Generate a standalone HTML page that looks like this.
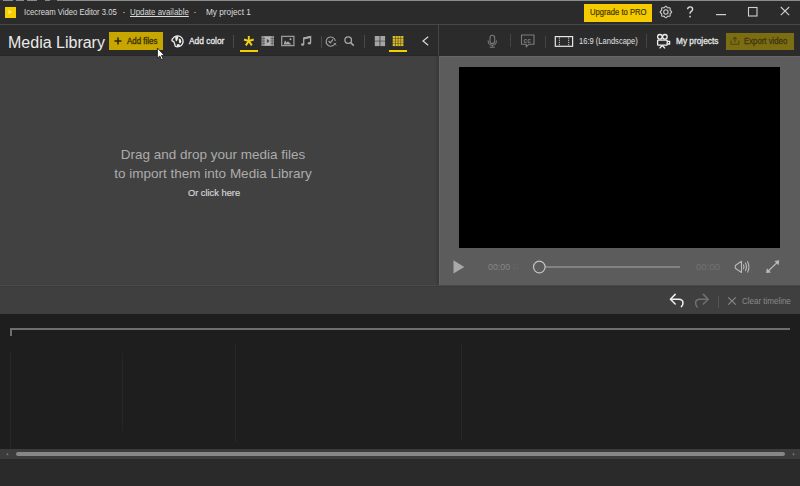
<!DOCTYPE html>
<html><head><meta charset="utf-8">
<style>
*{margin:0;padding:0;box-sizing:border-box}
html,body{width:800px;height:486px;overflow:hidden;background:#2a2a2a;font-family:"Liberation Sans",sans-serif}
.a{position:absolute}
.t{position:absolute;white-space:nowrap;line-height:1;transform-origin:0 0}
svg{position:absolute;overflow:visible;left:0;top:0}
</style></head><body>
<!-- title bar -->
<div class="a" style="left:0;top:0;width:800px;height:24px;background:#2b2b2b"></div>
<div class="a" style="left:0;top:0;width:800px;height:1px;background:#8c8c8c"></div>
<div class="a" style="left:0;top:0;width:3px;height:1px;background:#333"></div><div class="a" style="left:13px;top:0;width:3px;height:1px;background:#333"></div><div class="a" style="left:24px;top:0;width:3px;height:1px;background:#2a2a2a"></div><div class="a" style="left:37px;top:0;width:8px;height:1px;background:#2a2a2a"></div><div class="a" style="left:50px;top:0;width:7px;height:1px;background:#333"></div>
<div class="a" style="left:0;top:24px;width:800px;height:1px;background:#474747"></div>
<div class="a" style="left:5px;top:6.5px;width:11px;height:11px;background:#f5cf00"></div>
<div class="t" style="left:23.5px;top:8.4px;font-size:9px;color:#dcdcdc;transform:scaleX(0.856)">Icecream Video Editor 3.05</div>
<div class="a" style="left:123px;top:12px;width:2px;height:1px;background:#888"></div>
<div class="t" style="left:129.5px;top:8.4px;font-size:9px;color:#dcdcdc;text-decoration:underline;transform:scaleX(0.877)">Update available</div>
<div class="a" style="left:194px;top:12px;width:2px;height:1px;background:#888"></div>
<div class="t" style="left:206px;top:8.4px;font-size:9px;color:#dcdcdc;transform:scaleX(0.914)">My project 1</div>
<div class="a" style="left:584px;top:4px;width:68px;height:18px;background:#f5cb00"></div>
<div class="t" style="left:589.5px;top:8.4px;font-size:9px;color:#403600;-webkit-text-stroke:0.2px #403600;transform:scaleX(0.85)">Upgrade to PRO</div>
<!-- toolbar -->
<div class="a" style="left:0;top:25px;width:800px;height:31px;background:#2b2b2b"></div>
<div class="a" style="left:0;top:55px;width:438px;height:1px;background:#272727"></div>
<div class="a" style="left:438px;top:25px;width:1px;height:31px;background:#454545"></div>
<div class="a" style="left:438px;top:56px;width:1px;height:229px;background:#3a3a3a"></div>
<div class="t" style="left:8px;top:34.5px;font-size:16px;color:#eaeaea">Media Library</div>
<div class="a" style="left:109px;top:32px;width:54px;height:18px;background:#c8a600"></div>
<div class="t" style="left:126.5px;top:36.5px;font-size:9px;color:#3a3000;-webkit-text-stroke:0.35px #3a3000;transform:scaleX(0.88)">Add files</div>
<div class="t" style="left:188.5px;top:36.5px;font-size:9px;color:#e8e8e8;-webkit-text-stroke:0.3px #e8e8e8;transform:scaleX(0.93)">Add color</div>
<div class="a" style="left:233px;top:35px;width:1px;height:13px;background:#4a4a4a"></div>
<div class="a" style="left:240px;top:50px;width:18px;height:2px;background:#f0d000"></div>
<div class="a" style="left:321px;top:36px;width:1px;height:12px;background:#4a4a4a"></div>
<div class="a" style="left:364px;top:35px;width:1px;height:13px;background:#4a4a4a"></div>
<div class="a" style="left:389px;top:50px;width:18px;height:2px;background:#f0d000"></div>
<div class="a" style="left:510px;top:34px;width:1px;height:13px;background:#444"></div>
<div class="a" style="left:545px;top:36px;width:1px;height:12px;background:#444"></div>
<div class="t" style="left:578.5px;top:36.5px;font-size:9px;color:#e0e0e0;transform:scaleX(0.839)">16:9 (Landscape)</div>
<div class="a" style="left:646px;top:34px;width:1px;height:14px;background:#444"></div>
<div class="t" style="left:675.5px;top:36.5px;font-size:9px;color:#e8e8e8;-webkit-text-stroke:0.3px #e8e8e8;transform:scaleX(0.92)">My projects</div>
<div class="a" style="left:726px;top:32.5px;width:68px;height:17.5px;background:#7d6d12"></div>
<div class="t" style="left:744px;top:36.5px;font-size:9px;color:#3e3710;-webkit-text-stroke:0.3px #3e3710;transform:scaleX(0.865)">Export video</div>
<!-- left panel -->
<div class="a" style="left:0;top:56px;width:438px;height:229px;background:#414141"></div>
<div class="a" style="left:436px;top:56px;width:2px;height:229px;background:#3b3b3b"></div>
<div class="t" style="left:0;top:146px;width:426px;text-align:center;font-size:13.5px;color:#acacac;line-height:18.6px">Drag and drop your media files<br>to import them into Media Library</div>
<div class="t" style="left:1px;top:188.5px;width:426px;text-align:center;font-size:9.3px;color:#d4d4d4;-webkit-text-stroke:0.2px #d4d4d4">Or click here</div>
<!-- right panel -->
<div class="a" style="left:439px;top:56px;width:361px;height:229px;background:#5c5c5c;border-top:1px solid #666;border-left:1px solid #636363"></div>
<div class="a" style="left:459px;top:67px;width:321px;height:181px;background:#000"></div>
<div class="t" style="left:487.5px;top:261.5px;font-size:9.8px;color:#858585;transform:scaleX(0.9)">00:00</div><div class="t" style="left:512px;top:263px;font-size:8px;color:#686868;transform:scaleX(0.85)">11</div>
<div class="a" style="left:545px;top:266px;width:135px;height:2px;background:#838383"></div>
<div class="t" style="left:696.3px;top:262.5px;font-size:9px;color:#717171;transform:scaleX(1.07)">00:00</div>
<!-- timeline bar -->
<div class="a" style="left:0;top:285px;width:800px;height:29px;background:#3f3f3f"></div>
<div class="a" style="left:0;top:286px;width:800px;height:1px;background:#3a3a3a"></div>
<div class="a" style="left:0;top:285px;width:800px;height:1px;background:#4a4a4a"></div>
<div class="a" style="left:718px;top:296px;width:1px;height:12px;background:#555"></div>
<div class="t" style="left:741.5px;top:297px;font-size:9px;color:#8a8a8a;transform:scaleX(0.887)">Clear timeline</div>
<!-- timeline -->
<div class="a" style="left:0;top:314px;width:800px;height:135px;background:#1e1e1e"></div>
<div class="a" style="left:10px;top:328px;width:780px;height:2px;background:#6e6e6e"></div>
<div class="a" style="left:10px;top:328px;width:2px;height:8px;background:#6e6e6e"></div>
<div class="a" style="left:10px;top:351px;width:1px;height:98px;background:#262626"></div>
<div class="a" style="left:122px;top:353px;width:1px;height:78px;background:#262626"></div>
<div class="a" style="left:235px;top:345px;width:1px;height:97px;background:#282828"></div>
<div class="a" style="left:461px;top:344px;width:1px;height:96px;background:#282828"></div>
<!-- scrollbar -->
<div class="a" style="left:0;top:449px;width:800px;height:10px;background:#3c3c3c"></div>
<div class="a" style="left:16px;top:451.8px;width:769px;height:4.6px;border-radius:2.3px;background:#878787"></div>

<svg width="800" height="486" viewBox="0 0 800 486">
 <!-- logo play -->
 <path d="M8.4 9.7 L12.2 12 L8.4 14.3Z" fill="#fff06a"/>
 <!-- gear -->
 <g fill="none" stroke="#cfcfcf" stroke-width="1.1">
  <path d="M671.65 12.00 L671.56 12.37 L671.30 12.71 L670.95 13.00 L670.58 13.26 L670.28 13.49 L670.10 13.74 L670.05 14.05 L670.10 14.42 L670.18 14.86 L670.22 15.32 L670.16 15.74 L669.97 16.07 L669.64 16.26 L669.22 16.32 L668.76 16.28 L668.32 16.20 L667.95 16.15 L667.64 16.20 L667.39 16.38 L667.16 16.68 L666.90 17.05 L666.61 17.40 L666.27 17.66 L665.90 17.75 L665.53 17.66 L665.19 17.40 L664.90 17.05 L664.64 16.68 L664.41 16.38 L664.16 16.20 L663.85 16.15 L663.48 16.20 L663.04 16.28 L662.58 16.32 L662.16 16.26 L661.83 16.07 L661.64 15.74 L661.58 15.32 L661.62 14.86 L661.70 14.43 L661.75 14.05 L661.70 13.74 L661.52 13.49 L661.22 13.26 L660.85 13.00 L660.50 12.71 L660.24 12.37 L660.15 12.00 L660.24 11.63 L660.50 11.29 L660.85 11.00 L661.22 10.74 L661.52 10.51 L661.70 10.26 L661.75 9.95 L661.70 9.58 L661.62 9.14 L661.58 8.68 L661.64 8.26 L661.83 7.93 L662.16 7.74 L662.58 7.68 L663.04 7.72 L663.48 7.80 L663.85 7.85 L664.16 7.80 L664.41 7.62 L664.64 7.32 L664.90 6.95 L665.19 6.60 L665.53 6.34 L665.90 6.25 L666.27 6.34 L666.61 6.60 L666.90 6.95 L667.16 7.32 L667.39 7.62 L667.64 7.80 L667.95 7.85 L668.32 7.80 L668.76 7.72 L669.22 7.68 L669.64 7.74 L669.97 7.93 L670.16 8.26 L670.22 8.68 L670.18 9.14 L670.10 9.57 L670.05 9.95 L670.10 10.26 L670.28 10.51 L670.58 10.74 L670.95 11.00 L671.30 11.29 L671.56 11.63Z" stroke-linejoin="round"/>
  <circle cx="665.9" cy="12" r="2.2"/>
 </g>
 <!-- ? -->
 <path d="M687.6 9.2 Q687.8 6.9 690.2 6.9 Q692.6 6.9 692.6 9.2 Q692.6 10.7 691 11.6 Q690 12.2 690 13.8" fill="none" stroke="#dcdcdc" stroke-width="1.4"/>
 <rect x="689.3" y="15.8" width="1.5" height="1.6" fill="#dcdcdc"/>
 <!-- window controls -->
 <rect x="716" y="14" width="10" height="1.2" fill="#cfcfcf"/>
 <rect x="748.5" y="7.5" width="8.5" height="8.5" fill="none" stroke="#cfcfcf" stroke-width="1.1"/>
 <path d="M780.8 7 L789.2 15.2 M789.2 7 L780.8 15.2" stroke="#cfcfcf" stroke-width="1.1"/>

 <!-- add files plus -->
 <path d="M118 37.5 V44.5 M114.5 41 H121.5" stroke="#2a2400" stroke-width="1.5"/>
 <!-- globe -->
 <g fill="#ececec">
  <path d="M172.84 38.55 A5.5 5.5 0 1 1 175.27 46.28 L174.6 43.6 L173.9 41.9 L171.9 40.6 L172.1 39.3Z" fill="none" stroke="#ececec" stroke-width="1.3" stroke-linejoin="round"/>
  <path d="M175.6 36.4 L178 36.1 L178.2 38 L177.4 40 L176.5 41.5 L175.6 40.2 L175.2 38Z"/>
  <path d="M178.8 38.4 L180.6 38.9 L181.3 41.2 L180.8 43.3 L179.4 43.2 L178.9 41.5Z"/>
  <path d="M176.6 44.4 L178.7 43.9 L180 45 L179.5 46.6 L177 46.7Z"/>
 </g>
 <!-- asterisk -->
 <g stroke="#f2d21a" stroke-width="1.9" stroke-linecap="butt">
  <path d="M248.8 36 V41"/>
  <path d="M248.8 41 L244 39.5"/>
  <path d="M248.8 41 L253.7 39.5"/>
  <path d="M248.8 41 L245.8 45.4"/>
  <path d="M248.8 41 L251.8 45.4"/>
 </g>
 <!-- film -->
 <g>
  <rect x="261.5" y="36" width="12.5" height="10" fill="#9a9a9a"/>
  <rect x="265" y="36.8" width="5.6" height="8.4" fill="#b5b5b5"/>
  <path d="M263.2 36 v10 M272.4 36 v10" stroke="#6a6a6a" stroke-width="0.6"/>
  <path d="M261.5 38.6 h3.5 M261.5 41 h3.5 M261.5 43.4 h3.5 M270.6 38.6 h3.4 M270.6 41 h3.4 M270.6 43.4 h3.4" stroke="#555" stroke-width="0.7"/>
  <path d="M266.8 38.8 L269.6 41 L266.8 43.2Z" fill="#444"/>
 </g>
 <!-- image -->
 <g>
  <rect x="281.7" y="36.4" width="12.2" height="9.2" fill="none" stroke="#9a9a9a" stroke-width="1.3"/>
  <path d="M283.6 44.6 L285 40.2 L286.6 42.5 L288 41.2 L291.5 44.6Z" fill="#a8a8a8"/>
  <circle cx="290.5" cy="39.2" r="1" fill="#b0b0b0"/>
 </g>
 <!-- music -->
 <g fill="#a8a8a8">
  <path d="M303.7 44.3 V38 L310.6 36.5 V43" fill="none" stroke="#a8a8a8" stroke-width="1.3"/>
  <path d="M303.7 37.4 L310.6 36 V38 L303.7 39.5Z"/>
  <ellipse cx="302.6" cy="44.5" rx="1.6" ry="1.3"/>
  <ellipse cx="309.4" cy="43.3" rx="1.6" ry="1.3"/>
 </g>
 <!-- check clock -->
 <g fill="none" stroke="#a0a0a0" stroke-width="1.1">
  <path d="M334.3 44.5 A4.6 4.6 0 1 1 335.3 41"/>
  <path d="M328.6 41 L330.3 42.8 L333 39.3" stroke-width="1.2"/>
  <path d="M333.6 42.8 L336.2 45.5 M336.2 42.8 L333.6 45.5" stroke-width="0.9"/>
 </g>
 <!-- search -->
 <g fill="none" stroke="#a8a8a8" stroke-width="1.3">
  <circle cx="348.2" cy="40.1" r="3.3"/>
  <path d="M350.6 42.6 L353.8 45.6" stroke-width="1.6"/>
 </g>
 <!-- grid 2x2 -->
 <g fill="#a5a5a5">
  <rect x="374.8" y="36" width="4.8" height="4.8"/>
  <rect x="380.3" y="36" width="4.8" height="4.8"/>
  <rect x="374.8" y="41.3" width="4.8" height="4.8"/>
  <rect x="380.3" y="41.3" width="4.8" height="4.8"/>
 </g>
 <!-- grid 4x4 -->
 <g fill="#dcbc28">
  <rect x="392.7" y="36" width="2.3" height="2.3"/><rect x="395.5" y="36" width="2.3" height="2.3"/><rect x="398.3" y="36" width="2.3" height="2.3"/><rect x="401.1" y="36" width="2.3" height="2.3"/>
  <rect x="392.7" y="38.6" width="2.3" height="2.3"/><rect x="395.5" y="38.6" width="2.3" height="2.3"/><rect x="398.3" y="38.6" width="2.3" height="2.3"/><rect x="401.1" y="38.6" width="2.3" height="2.3"/>
  <rect x="392.7" y="41.2" width="2.3" height="2.3"/><rect x="395.5" y="41.2" width="2.3" height="2.3"/><rect x="398.3" y="41.2" width="2.3" height="2.3"/><rect x="401.1" y="41.2" width="2.3" height="2.3"/>
  <rect x="392.7" y="43.8" width="2.3" height="2.3"/><rect x="395.5" y="43.8" width="2.3" height="2.3"/><rect x="398.3" y="43.8" width="2.3" height="2.3"/><rect x="401.1" y="43.8" width="2.3" height="2.3"/>
 </g>
 <!-- chevron -->
 <path d="M428.2 36.8 L423 41 L428.2 45.2" fill="none" stroke="#d8d8d8" stroke-width="1.2"/>

 <!-- mic -->
 <g fill="none" stroke="#7a7a7a" stroke-width="1.1">
  <rect x="490" y="35.3" width="4.7" height="8.3" rx="2.35"/>
  <path d="M488.2 40.5 V41.2 A4.1 4.1 0 0 0 496.4 41.2 V40.5"/>
  <path d="M492.3 45.3 V47 M489.7 47.2 H494.9"/>
 </g>
 <!-- CC -->
 <g fill="none" stroke="#7c7c7c" stroke-width="1.1">
  <path d="M521.5 35 H534 V44.3 H528.6 L526.2 46.8 V44.3 H521.5Z" stroke-linejoin="round"/>
 </g>
 <text x="523.6" y="42.6" font-family="Liberation Sans" font-size="6.6" font-weight="bold" fill="#7c7c7c">cc</text>
 <!-- aspect -->
 <g fill="none" stroke="#e6e6e6">
  <rect x="555.3" y="36.6" width="17.3" height="9.7" stroke-width="1.2"/>
  <path d="M559.4 37.5 V45.5 M568.7 37.5 V45.5" stroke-width="0.9" stroke-dasharray="1.2 1"/>
 </g>
 <!-- camera -->
 <g fill="none" stroke="#f0f0f0" stroke-width="1.3">
  <circle cx="659.9" cy="36.8" r="2.3"/>
  <circle cx="664.9" cy="36.8" r="2.3"/>
  <rect x="657.6" y="40.2" width="9.6" height="5" rx="0.5"/>
  <path d="M667.4 41.3 H669.6 V44 H667.4"/>
  <path d="M662.2 45.5 L659.6 48.4 M662.4 45.5 L665 48.4"/>
 </g>
 <!-- export icon -->
 <g fill="none" stroke="#4e4512" stroke-width="1.1">
  <path d="M731 40.5 V44.3 H738.8 V40.5"/>
  <path d="M734.9 42.2 V37.3 M733 39.2 L734.9 37.3 L736.8 39.2"/>
 </g>

 <!-- cursor -->
 <path d="M157.4 48 V58.2 L159.8 56 L161.6 60 L163.2 59.2 L161.5 55.4 L164.4 55.4Z" fill="#fff" stroke="#111" stroke-width="0.8" stroke-linejoin="round"/>

 <!-- play -->
 <path d="M453.5 260.3 L464.3 267 L453.5 273.6Z" fill="#a8a8a8"/>
 <!-- seek circle -->
 <circle cx="539.3" cy="267" r="5.8" fill="none" stroke="#c4c4c4" stroke-width="1.2"/>
 <!-- speaker -->
 <g fill="none" stroke="#b8b8b8" stroke-width="1.1">
  <path d="M741.5 261.3 L735.3 265.5 V268.3 L741.5 272.5Z" stroke-linejoin="round"/>
  <path d="M743.3 264.5 Q744.8 266.9 743.3 269.3"/>
  <path d="M745.3 262.8 Q747.6 266.9 745.3 271"/>
  <path d="M747.4 261.3 Q750.4 266.9 747.4 272.5"/>
 </g>
 <!-- expand -->
 <g fill="none" stroke="#b8b8b8" stroke-width="1.2">
  <path d="M767.5 271.7 L777.9 261.7"/>
  <path d="M779.3 260.3 L778.6 265.2 L774.4 261Z" fill="#b8b8b8" stroke="none"/>
  <path d="M766.1 273.1 L766.8 268.2 L771 272.4Z" fill="#b8b8b8" stroke="none"/>
 </g>

 <!-- undo -->
 <g fill="none" stroke="#f0f0f0" stroke-width="1.5" stroke-linecap="round" stroke-linejoin="round">
  <path d="M675.2 294.4 L670.4 299.2 L675.2 304"/>
  <path d="M670.8 299.2 H678.6 Q683 299.2 683 303 Q683 305.2 681.4 306.6"/>
 </g>
 <!-- redo -->
 <g fill="none" stroke="#717171" stroke-width="1.5" stroke-linecap="round" stroke-linejoin="round">
  <path d="M703.4 294.4 L708.2 299.2 L703.4 304"/>
  <path d="M707.8 299.2 H700 Q695.6 299.2 695.6 303 Q695.6 305.4 697.2 307"/>
 </g>
 <!-- X clear -->
 <path d="M728.2 297.3 L735.8 304.7 M735.8 297.3 L728.2 304.7" stroke="#8a8a8a" stroke-width="1.1"/>
 <!-- scroll arrows -->
 <path d="M8.2 452.8 L6.2 454.3 L8.2 455.8Z" fill="#777"/>
 <path d="M792.8 452.8 L794.8 454.3 L792.8 455.8Z" fill="#777"/>
</svg>
</body></html>
